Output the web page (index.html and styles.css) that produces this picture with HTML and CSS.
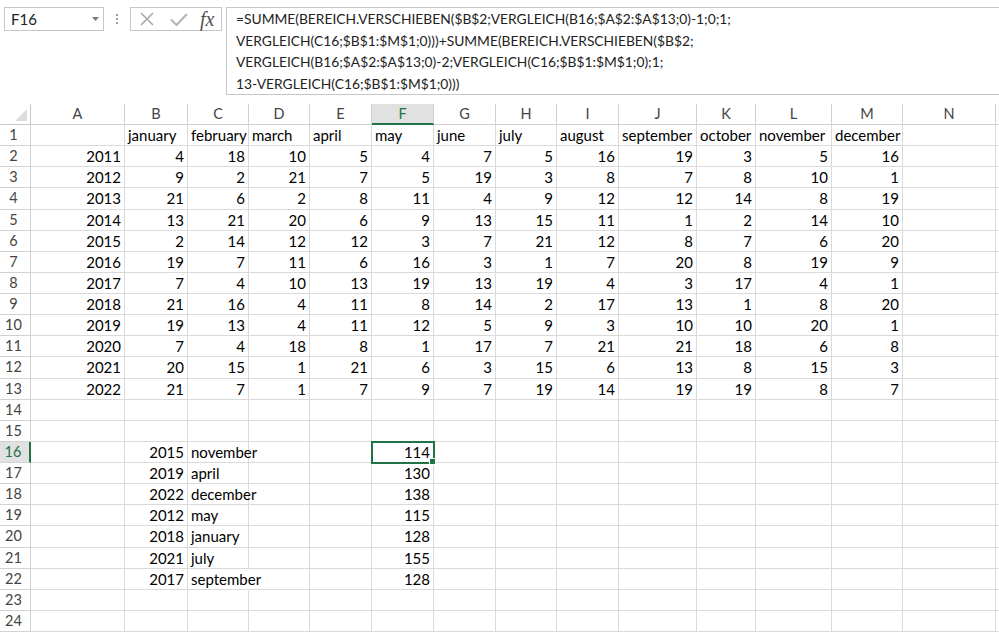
FILE: index.html
```html
<!DOCTYPE html>
<html>
<head>
<meta charset="utf-8">
<link rel="stylesheet" href="styles.css">
</head>
<body>
<div class="app">
  <div class="topbar">
    <div class="namebox"><span class="ref">F16</span><svg class="dd" width="7" height="4" viewBox="0 0 7 4"><polygon points="0,0 7,0 3.5,4" fill="#7a7a7a"/></svg></div>
    <div class="dots"><span></span><span></span><span></span></div>
    <div class="btns">
      <svg width="16" height="16" viewBox="0 0 16 16"><path d="M2 2 L14 14 M14 2 L2 14" stroke="#a8a8a8" stroke-width="1.6" fill="none"/></svg>
      <svg width="18" height="16" viewBox="0 0 18 16"><path d="M1 8.5 L6.5 14 L17 3" stroke="#b4b4b4" stroke-width="2" fill="none"/></svg>
      <span class="fx">fx</span>
    </div>
    <div class="formula">=SUMME(BEREICH.VERSCHIEBEN($B$2;VERGLEICH(B16;$A$2:$A$13;0)-1;0;1;<br>VERGLEICH(C16;$B$1:$M$1;0)))+SUMME(BEREICH.VERSCHIEBEN($B$2;<br>VERGLEICH(B16;$A$2:$A$13;0)-2;VERGLEICH(C16;$B$1:$M$1;0);1;<br>13-VERGLEICH(C16;$B$1:$M$1;0)))</div>
  </div>
  <div class="sheet" id="sheet"></div>
</div>
<script src="app.js"></script>
</body>
</html>
```
FILE: app.js
```js
const months = ["january","february","march","april","may","june","july","august","september","october","november","december"];
const data = {
  2011:[4,18,10,5,4,7,5,16,19,3,5,16],
  2012:[9,2,21,7,5,19,3,8,7,8,10,1],
  2013:[21,6,2,8,11,4,9,12,12,14,8,19],
  2014:[13,21,20,6,9,13,15,11,1,2,14,10],
  2015:[2,14,12,12,3,7,21,12,8,7,6,20],
  2016:[19,7,11,6,16,3,1,7,20,8,19,9],
  2017:[7,4,10,13,19,13,19,4,3,17,4,1],
  2018:[21,16,4,11,8,14,2,17,13,1,8,20],
  2019:[19,13,4,11,12,5,9,3,10,10,20,1],
  2020:[7,4,18,8,1,17,7,21,21,18,6,8],
  2021:[20,15,1,21,6,3,15,6,13,8,15,3],
  2022:[21,7,1,7,9,7,19,14,19,19,8,7]
};
const lookups = {16:[2015,"november",114],17:[2019,"april",130],18:[2022,"december",138],19:[2012,"may",115],20:[2018,"january",128],21:[2021,"july",155],22:[2017,"september",128]};
const cols = ["A","B","C","D","E","F","G","H","I","J","K","L","M","N",""];
const sheet = document.getElementById("sheet");
function cell(cls, text) {
  const d = document.createElement("div");
  d.className = cls;
  if (text !== undefined && text !== "") d.textContent = text;
  sheet.appendChild(d);
  return d;
}
const corner = cell("corner");
corner.innerHTML = '<svg width="12" height="12" viewBox="0 0 12 12"><polygon points="12,0 12,12 0,12" fill="#dcdcdc"/></svg>';
cols.forEach(c => cell("ch" + (c === "F" ? " ch-sel" : ""), c));
for (let r = 1; r <= 24; r++) {
  cell("rh" + (r === 16 ? " rh-sel" : ""), r);
  const row = new Array(15).fill(null).map(() => ({t:"", cls:""}));
  if (r === 1) months.forEach((m, i) => row[i + 1] = {t:m, cls:"txt"});
  const year = 2009 + r;
  if (data[year] && r >= 2 && r <= 13) {
    row[0] = {t:year, cls:"num"};
    data[year].forEach((v, i) => row[i + 1] = {t:v, cls:"num"});
  }
  if (lookups[r]) {
    row[1] = {t:lookups[r][0], cls:"num"};
    row[2] = {t:lookups[r][1], cls:"txt" + (lookups[r][1].length > 8 ? " spill" : "")};
    row[5] = {t:lookups[r][2], cls:"num" + (r === 16 ? " sel" : "")};
  }
  row.forEach(c => cell("c " + c.cls, c.t));
}
```
FILE: styles.css
```css
html, body { margin: 0; padding: 0; background: #fff; }
.app { width: 999px; height: 634px; overflow: hidden; font-family: Lato, "Open Sans", sans-serif; color: #000; }
.topbar { height: 104px; box-sizing: border-box; display: flex; align-items: flex-start; padding-top: 7px; padding-left: 4px; }
.namebox { width: 100px; height: 24px; box-sizing: border-box; border: 1px solid #c6c6c6; display: flex; align-items: center; justify-content: space-between; padding: 0 4px 0 6px; font-size: 15px; color: #222; }
.dots { width: 26px; height: 24px; display: flex; flex-direction: column; align-items: center; justify-content: center; gap: 2px; }
.dots span { width: 2px; height: 2px; background: #a0a0a0; }
.btns { width: 92px; height: 24px; box-sizing: border-box; border: 1px solid #c6c6c6; display: flex; align-items: center; padding-left: 8px; gap: 15px; }
.fx { font-family: "Liberation Serif", serif; font-style: italic; font-size: 20px; color: #505050; margin-left: -3px; line-height: 1; }
.formula { margin-left: 4px; flex: 1; height: 88px; box-sizing: border-box; border: 1px solid #c6c6c6; border-right: none; padding: 0 0 0 9px; font-size: 13.8px; line-height: 21.5px; color: #222; white-space: nowrap; }
.sheet { display: grid; grid-template-columns: 31px 94px 63px 61px 61px 62px 62px 62px 61px 62px 78px 59px 76px 71px 93px 20px; grid-template-rows: 21px; grid-auto-rows: 21.13px; font-size: 15px; }
.sheet > div { box-sizing: border-box; border-right: 1px solid #dadada; border-bottom: 1px solid #dadada; white-space: nowrap; }
.corner { display: flex; align-items: flex-end; justify-content: flex-end; padding: 0 3px 3px 0; border-color: #c8c8c8 !important; }
.ch { text-align: center; color: #444; font-size: 14.5px; line-height: 20px; border-color: #d2d2d2 !important; }
.ch-sel { background: #e1e1e1; border-bottom: 2px solid #217346 !important; color: #217346; }
.rh { text-align: center; color: #444; font-size: 14.5px; line-height: 20px; padding-right: 3px; border-color: #d2d2d2 !important; }
.rh-sel { background: #e1e1e1; border-right: 2px solid #217346 !important; color: #217346; }
.c { line-height: 20px; padding: 0 3px; }
.num { text-align: right; }
.txt { text-align: left; }
.spill { border-right-color: transparent !important; position: relative; z-index: 1; overflow: visible; }
.sel { outline: 2px solid #217346; outline-offset: -1px; position: relative; z-index: 2; }
.sel::after { content: ""; position: absolute; right: -3px; bottom: -3px; width: 5px; height: 5px; background: #217346; border: 1px solid #fff; }
```
